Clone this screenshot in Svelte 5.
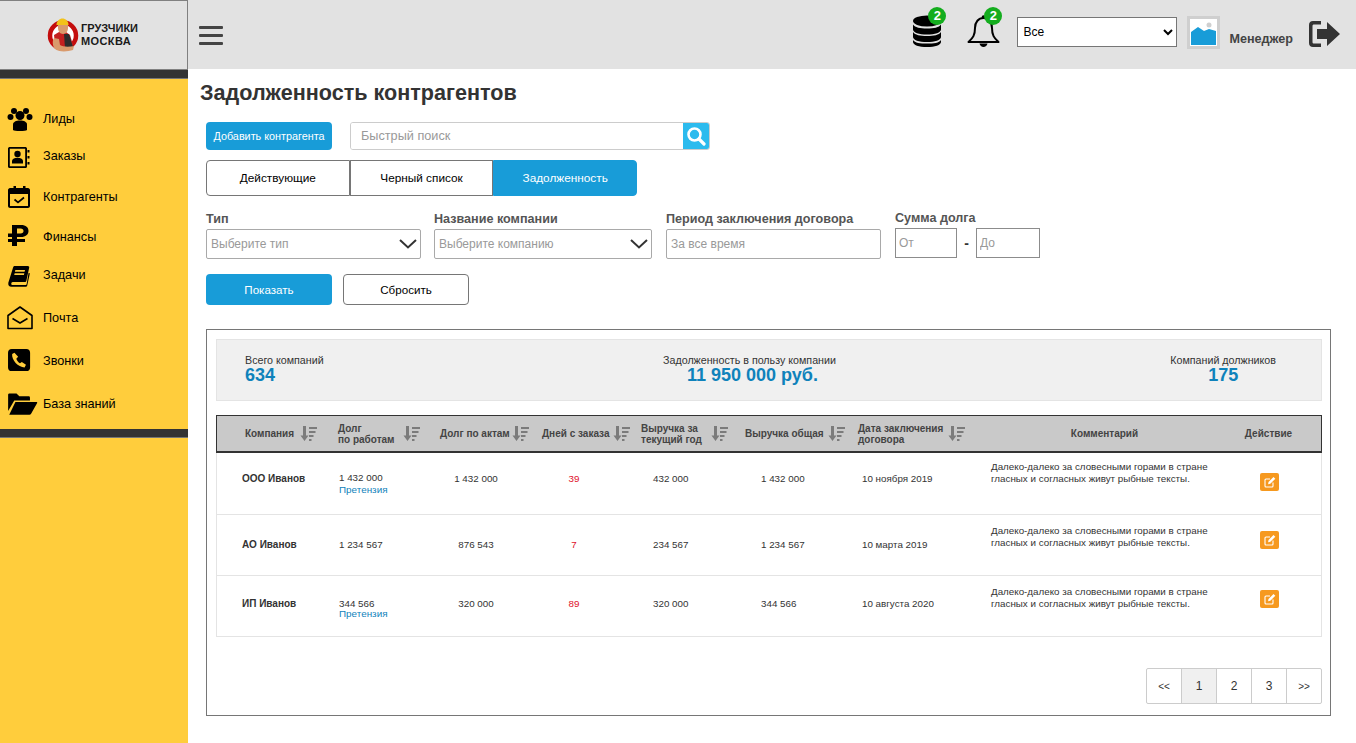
<script>
  const nav = ['Лиды', 'Заказы', 'Контрагенты', 'Финансы', 'Задачи', 'Почта', 'Звонки', 'База знаний'];

  const columns = [
    { key: 'company', title: 'Компания', sort: true },
    { key: 'work', title: 'Долг<br>по работам', sort: true },
    { key: 'acts', title: 'Долг по актам', sort: true },
    { key: 'days', title: 'Дней с заказа', sort: true },
    { key: 'year', title: 'Выручка за<br>текущий год', sort: true },
    { key: 'total', title: 'Выручка общая', sort: true },
    { key: 'date', title: 'Дата заключения<br>договора', sort: true },
    { key: 'comment', title: 'Комментарий' },
    { key: 'action', title: 'Действие' }
  ];

  const comment = 'Далеко-далеко за словесными горами в стране гласных и согласных живут рыбные тексты.';

  const rows = [
    { name: 'ООО Иванов', work: '1 432 000', claim: true, acts: '1 432 000', days: 39, year: '432 000', total: '1 432 000', date: '10 ноября 2019' },
    { name: 'АО Иванов', work: '1 234 567', claim: false, acts: '876 543', days: 7, year: '234 567', total: '1 234 567', date: '10 марта 2019' },
    { name: 'ИП Иванов', work: '344 566', claim: true, acts: '320 000', days: 89, year: '320 000', total: '344 566', date: '10 августа 2020' }
  ];

  const pages = ['<<', '1', '2', '3', '>>'];
</script>

{#snippet sortIcon()}
  <svg class="sort" viewBox="0 0 17 15" width="17" height="15">
    <path d="M3 0h3v9.500h2.500L4.500 15 .5 9.500H3z" fill="#7b7b7b" />
    <path d="M9 1h8v2H9zM9 5h6.500v2H9zM9 9h4.500v2H9zM9 13h2.500v2H9z" fill="#7b7b7b" />
  </svg>
{/snippet}

{#snippet navIcon(i)}
  <svg class="nav-icon" viewBox="0 0 26 26" width="26" height="26">
    {#if i === 0}
      <circle cx="7" cy="5" r="3" /><circle cx="19" cy="5" r="3" />
      <circle cx="3.500" cy="11" r="3" /><circle cx="22.500" cy="11" r="3" />
      <circle cx="13" cy="9.500" r="4.500" />
      <path d="M6 24v-5.500c0-2.500 3-4 7-4s7 1.500 7 4V24c-1 .6-3 1-7 1s-6-.4-7-1z" />
    {:else if i === 1}
      <path d="M1 5.500C1 4.500 2 4 3 4h15c1 0 2 .5 2 1.500v18c0 1-1 1.500-2 1.500H3c-1 0-2-.5-2-1.500zM2.800 5.800v17.400h15.400V5.800z" fill-rule="evenodd" />
      <path d="M20.500 7h2v2.500h-2zM20.500 13h2v2.500h-2zM20.500 19h2v2.500h-2z" />
      <circle cx="10.500" cy="11" r="3.200" /><path d="M5 20.500v-2.500c0-2 2-3.300 5.500-3.300s5.500 1.300 5.500 3.300v2.500z" />
    {:else if i === 2}
      <path d="M1 6c0-1 1-2 2-2h3.500V2h2.500v2h7V2h2.500v2H21c1 0 2 1 2 2v16c0 1-1 2-2 2H3c-1 0-2-1-2-2zM3 10v12h18V10z" fill-rule="evenodd" />
      <path d="M7.500 15.500l3.500 3 6-5" fill="none" stroke="#000" stroke-width="1.700" />
    {:else if i === 3}
      <path d="M5 1h9c5 0 7.500 2.500 7.500 6s-3 6-7.500 6h-4v2h8v3h-8v4H5v-4H1v-3h4v-2H1V9.500h4zM10 4.500v5h3.500c2 0 3-1 3-2.500s-1-2.500-3-2.500z" fill-rule="evenodd" />
    {:else if i === 4}
      <g transform="translate(0 3.500) scale(.88 .82)">
        <path d="M7 2c.3-1 1-1.500 2-1.500h14.500c1.500 0 2 1 1.700 2.200L22 18.500c-.2 1-.8 1.500-2 1.500H6.500c-2 0-2.300 3.800 0 3.800H21c.5 0 1 0 1.300-.8L24.500 9l1.500.5-3 15c-.2 1-1 1.500-2 1.500H5c-2.500 0-4-2-3.500-5zM9.500 5.500l-.5 2h11l.5-2zM8.700 9.500l-.5 2h11l.5-2z" fill-rule="evenodd" />
      </g>
    {:else if i === 5}
      <path d="M1 10.500L13 2l12 8.500v13H1z" fill="none" stroke="#000" stroke-width="1.600" stroke-linejoin="round" />
      <path d="M5.500 13.500l7.500 4.500 7.500-4.500" fill="none" stroke="#000" stroke-width="1.600" />
    {:else if i === 6}
      <g transform="translate(.1 .1) scale(.92)">
        <path d="M5 1h16c2.500 0 4 1.500 4 4v16c0 2.500-1.500 4-4 4H5c-2.500 0-4-1.500-4-4V5c0-2.500 1.500-4 4-4zM8 5L5.500 6.500c-.8 6.500 6.500 14.500 13.500 14.500l1.500-3-4.500-3-2 1.500c-1.800-1-3.500-3.200-4-5L12 9.500z" fill-rule="evenodd" />
      </g>
    {:else}
      <g transform="translate(0 1) scale(1.120 .95)">
        <path d="M1 3c0-1 .5-1.500 1.500-1.500h6l2.500 3h8c1 0 1.500.5 1.500 1.500v3H6.500L1 20z" />
        <path d="M7.500 10.500h18.500c1 0 1.200.6.800 1.300L21.500 23c-.3.600-.8 1-1.500 1H2z" />
      </g>
    {/if}
  </svg>
{/snippet}

<div class="page">
  <aside class="sidebar">
    <div class="logo">
      <svg viewBox="0 0 34 36" width="34" height="36" class="logo-mark">
        <circle cx="17" cy="17.500" r="13" fill="#fff" stroke="#c40d0d" stroke-width="4.500" />
        <path d="M8 17l5-3h7l4 3 3 10-1 4-12 1-5-6z" fill="#c4201f" />
        <path d="M18 16h5l4 13-8 1z" fill="#2c2c2c" />
        <path d="M12 6h10v4c0 3-2 6-5 6s-5-3-5-6z" fill="#d99a6c" />
        <path d="M10.500 7c0-4 3-6.500 6-6.500s6 2.500 6 6.500z" fill="#f2c21a" />
        <path d="M8 20c-2 3-1.500 8 1 11 3 3 12 3 18 1l1-4c-5 1-11 1-14-1l-1-6z" fill="#d99a6c" />
      </svg>
      <div class="logo-text">
        <span>ГРУЗЧИКИ</span>
        <span class="line-two">МОСКВА</span>
      </div>
    </div>
    <div class="bar"></div>
    <nav class="nav">
      {#each nav as item, i}
        <div class="nav-item">
          {@render navIcon(i)}
          <span>{item}</span>
        </div>
      {/each}
    </nav>
    <div class="bar"></div>
  </aside>

  <div class="main">
    <header class="header">
      <button class="burger" aria-label="Меню"><i></i><i></i><i></i></button>

      <div class="header-right">
        <div class="notify db">
          <svg viewBox="0 0 28 32" width="28" height="32">
            <ellipse cx="14" cy="6" rx="14" ry="5.500" />
            <path d="M0 9.500c2 3 7 4 14 4s12-1 14-4v5c0 3-6 5-14 5S0 17.500 0 14.500z" />
            <path d="M0 17.500c2 3 7 4 14 4s12-1 14-4v5c0 3-6 5-14 5S0 25.500 0 22.500z" transform="translate(0 -.5)" />
            <path d="M0 25c2 3 7 3.500 14 3.500S26 28 28 25v2c0 3-6 5-14 5S0 30 0 27z" />
          </svg>
          <b class="badge">2</b>
        </div>
        <div class="notify bell">
          <svg viewBox="0 0 33 32" width="33" height="32">
            <path d="M16.500 3c5 0 8.500 4 8.500 10 0 7 2 10 6.500 14H1.500C6 23 8 20 8 13c0-6 3.500-10 8.500-10z" fill="none" stroke="#000" stroke-width="2" stroke-linejoin="round" />
            <path d="M12.500 28.500c.5 2 2 3.500 4 3.500s3.500-1.500 4-3.500z" />
            <circle cx="16.500" cy="2" r="1.800" />
          </svg>
          <b class="badge">2</b>
        </div>
        <select class="scope">
          <option>Все</option>
        </select>
        <div class="avatar">
          <svg viewBox="0 0 27 27" width="27" height="27">
            <rect width="27" height="27" fill="#fff" />
            <circle cx="19" cy="6" r="2.500" fill="#cfcfcf" />
            <path d="M1 13l7-5 6 4 5-2 7 2v14H1z" fill="#189cd8" />
          </svg>
        </div>
        <span class="role">Менеджер</span>
        <svg class="logout" viewBox="0 0 31 26" width="31" height="26">
          <path d="M12 0v3.500H5c-1 0-1.500.5-1.500 1.500v16c0 1 .5 1.500 1.500 1.500h7V26H4c-2.500 0-4-1.500-4-4V4c0-2.500 1.500-4 4-4z" fill="#333" />
          <path d="M8 8h10V1l13 12-13 12v-7H8z" fill="#333" />
        </svg>
      </div>
    </header>

    <main class="content">
      <h1>Задолженность контрагентов</h1>

      <div class="toolbar">
        <button class="btn primary add">Добавить контрагента</button>
        <div class="search">
          <input type="text" placeholder="Быстрый поиск" />
          <button class="search-btn" aria-label="Поиск">
            <svg viewBox="0 0 20 20" width="20" height="20">
              <circle cx="8.500" cy="8.500" r="6" fill="none" stroke="#fff" stroke-width="2.600" />
              <path d="M13 13l5 5" stroke="#fff" stroke-width="3.200" stroke-linecap="round" />
            </svg>
          </button>
        </div>
      </div>

      <div class="tabs">
        <div class="tab">Действующие</div>
        <div class="tab">Черный список</div>
        <div class="tab active">Задолженность</div>
      </div>

      <div class="filters">
        <div class="field type">
          <span class="label">Тип</span>
          <div class="fake-select">
            <span>Выберите тип</span>
            <svg viewBox="0 0 18 10" width="18" height="10"><path d="M1 1l8 7.500L17 1" fill="none" stroke="#333" stroke-width="2" /></svg>
          </div>
        </div>
        <div class="field company">
          <span class="label">Название компании</span>
          <div class="fake-select">
            <span>Выберите компанию</span>
            <svg viewBox="0 0 18 10" width="18" height="10"><path d="M1 1l8 7.500L17 1" fill="none" stroke="#333" stroke-width="2" /></svg>
          </div>
        </div>
        <div class="field period">
          <span class="label">Период заключения договора</span>
          <div class="fake-select"><span>За все время</span></div>
        </div>
        <div class="field sum">
          <span class="label">Сумма долга</span>
          <div class="range">
            <input type="text" placeholder="От" />
            <b>-</b>
            <input type="text" placeholder="До" />
          </div>
        </div>
      </div>

      <div class="actions">
        <button class="btn primary">Показать</button>
        <button class="btn outline">Сбросить</button>
      </div>

      <section class="panel">
        <div class="summary">
          <div class="stat">
            <span>Всего компаний</span>
            <strong>634</strong>
          </div>
          <div class="stat center middle">
            <span>Задолженность в пользу компании</span>
            <strong>11 950 000 руб.</strong>
          </div>
          <div class="stat center">
            <span>Компаний должников</span>
            <strong>175</strong>
          </div>
        </div>

        <div class="table">
          <div class="thead">
            {#each columns as col}
              <div class="th {col.key}">
                <span>{@html col.title}</span>
                {#if col.sort}{@render sortIcon()}{/if}
              </div>
            {/each}
          </div>
          {#each rows as row, i}
            <div class="tr row{i + 1}">
              <div class="td company"><b>{row.name}</b></div>
              <div class="td work">
                <span>{row.work}</span>
                {#if row.claim}<a href="#claim">Претензия</a>{/if}
              </div>
              <div class="td acts">{row.acts}</div>
              <div class="td days">{row.days}</div>
              <div class="td year">{row.year}</div>
              <div class="td total">{row.total}</div>
              <div class="td date">{row.date}</div>
              <div class="td comment">{comment}</div>
              <div class="td action">
                <button class="edit" aria-label="Редактировать">
                  <svg viewBox="0 0 12 12" width="12" height="12">
                    <path d="M9 6.500V10c0 .6-.4 1-1 1H2c-.6 0-1-.4-1-1V4c0-.6.4-1 1-1h4" fill="none" stroke="#fff" stroke-width="1.100" />
                    <path d="M4.500 6l5-5 1.800 1.800-5 5-2.200.4z" fill="#fff" />
                  </svg>
                </button>
              </div>
            </div>
          {/each}
        </div>

        <div class="pagination">
          {#each pages as p, i}
            <div class="page-link" class:current={p === '1'} class:arrow={i === 0 || i === 4}>{p}</div>
          {/each}
        </div>
      </section>
    </main>
  </div>
</div>

<style>
  :global(body) {
    margin: 0;
    background: #fff;
  }

  .page {
    display: flex;
    height: 743px;
    overflow: hidden;
    font-family: "Liberation Sans", Arial, sans-serif;
    color: #333;
  }

  /* sidebar */
  .sidebar {
    width: 188px;
    flex: none;
    background: #ffcd3c;
  }

  .logo {
    box-sizing: border-box;
    height: 70px;
    background: #e2e2e2;
    border: 1px solid #808080;
    border-left: none;
    display: flex;
    align-items: center;
    padding-left: 46px;
    gap: 1px;
  }

  .logo-mark {
    margin-top: 2px;
  }

  .logo-text {
    display: flex;
    flex-direction: column;
    font-weight: 700;
    font-size: 11px;
    line-height: 13px;
    color: #1a1a1a;
  }

  .line-two {
    letter-spacing: .4px;
  }

  .bar {
    height: 8px;
    background: #333;
    border-bottom: 1px solid #777;
  }

  .nav {
    height: 350px;
    padding-top: 20px;
    box-sizing: border-box;
  }

  .nav-item {
    height: 40px;
    display: flex;
    align-items: center;
    gap: 10px;
    padding-left: 7px;
    font-size: 12.700px;
    color: #000;
  }

  .nav-item:nth-child(2) { margin-top: -3px; }
  .nav-item:nth-child(3) { margin-top: 1px; }
  .nav-item:nth-child(5) { margin-top: -2px; }
  .nav-item:nth-child(n+6) { margin-top: 3px; }

  .nav-icon {
    flex: none;
    fill: #000;
    overflow: visible;
  }

  /* top bar */
  .main {
    flex: 1;
    min-width: 0;
  }

  .header {
    height: 69px;
    background: #e2e2e2;
    display: flex;
    align-items: center;
    justify-content: space-between;
    padding: 0 16px 0 11px;
  }

  .burger {
    width: 24px;
    height: 19px;
    padding: 0;
    border: none;
    background: none;
    display: flex;
    flex-direction: column;
    justify-content: space-between;
    margin-top: 1px;
  }

  .burger i {
    display: block;
    height: 3px;
    background: #444;
    border-radius: 1px;
  }

  .header-right {
    display: flex;
    align-items: center;
    margin-top: -5px;
  }

  .notify {
    position: relative;
    display: flex;
    margin-top: -2px;
  }

  .notify.db {
    margin-right: 26px;
  }

  .notify.bell {
    margin-right: 17px;
  }

  .badge {
    position: absolute;
    top: -8px;
    right: -5px;
    width: 18px;
    height: 18px;
    border-radius: 50%;
    background: #14ad1e;
    color: #fff;
    font-size: 13px;
    line-height: 18px;
    text-align: center;
  }

  .bell .badge {
    right: -2px;
  }

  .scope {
    width: 160px;
    height: 30px;
    box-sizing: border-box;
    border: 1px solid #767676;
    background: #fff;
    font-family: inherit;
    font-size: 12px;
    color: #000;
    padding-left: 1px;
    margin-right: 10px;
  }

  .avatar {
    display: flex;
    border: 3px solid #cfcfcf;
    margin-right: 9px;
  }

  .role {
    font-size: 12.600px;
    font-weight: 700;
    color: #444;
    margin: 13px 16px 0 0;
  }

  .logout {
    margin-top: 4px;
  }

  /* content */
  .content {
    padding: 0 25px 0 18px;
  }

  h1 {
    margin: 0 0 0 -6px;
    padding-top: 11px;
    height: 53px;
    box-sizing: border-box;
    font-size: 21.600px;
    line-height: 25px;
    font-weight: 700;
    color: #333;
  }

  .toolbar {
    display: flex;
    gap: 18px;
  }

  .btn {
    box-sizing: border-box;
    width: 126px;
    border-radius: 4px;
    font-family: inherit;
    font-size: 11.600px;
    padding: 0;
  }

  .primary {
    background: #189cd8;
    border: none;
    color: #fff;
  }

  .outline {
    background: #fff;
    border: 1px solid #767676;
    color: #000;
  }

  .add {
    height: 28px;
    font-size: 10.800px;
  }

  .search {
    width: 360px;
    height: 28px;
    box-sizing: border-box;
    display: flex;
    border: 1px solid #ccc;
    border-radius: 3px;
    overflow: hidden;
  }

  .search input {
    flex: 1;
    min-width: 0;
    border: none;
    outline: none;
    padding: 0 10px;
    font-family: inherit;
    font-size: 12.700px;
  }

  input::placeholder {
    color: #999;
    opacity: 1;
  }

  .search-btn {
    width: 26px;
    padding: 0;
    border: none;
    background: #2cbbee;
    display: flex;
    align-items: center;
    justify-content: center;
  }

  .tabs {
    display: flex;
    margin-top: 10px;
    width: 431px;
  }

  .tab {
    box-sizing: border-box;
    flex: 1;
    height: 36px;
    line-height: 35px;
    text-align: center;
    font-size: 11.800px;
    color: #000;
    border: 1px solid #767676;
  }

  .tab:first-child {
    border-radius: 4px 0 0 4px;
  }

  .tab.active {
    background: #189cd8;
    border-color: #189cd8;
    color: #fff;
    border-radius: 0 4px 4px 0;
  }

  .filters {
    display: flex;
    margin-top: 14px;
    height: 64px;
  }

  .field {
    display: flex;
    flex-direction: column;
  }

  .field.type { width: 215px; margin-right: 13px; }
  .field.company { width: 218px; margin-right: 14px; }
  .field.period { width: 215px; margin-right: 14px; }
  .field.sum { margin-top: -1px; }

  .label {
    font-size: 12.600px;
    line-height: 16px;
    font-weight: 700;
    color: #555;
    padding-top: 1px;
    margin-bottom: 2px;
  }

  .fake-select {
    box-sizing: border-box;
    height: 30px;
    border: 1px solid #a9a9a9;
    border-radius: 2px;
    display: flex;
    align-items: center;
    justify-content: space-between;
    padding: 0 3px 0 4px;
    font-size: 12px;
    color: #999;
  }

  .range {
    display: flex;
    align-items: center;
  }

  .range input {
    box-sizing: border-box;
    width: 62px;
    height: 30px;
    border: 1px solid #8c8c8c;
    padding: 0 3px;
    font-family: inherit;
    font-size: 12px;
    outline: none;
  }

  .range input:last-child {
    width: 64px;
  }

  .range b {
    width: 19px;
    text-align: center;
    font-size: 14px;
  }

  .actions {
    display: flex;
    gap: 11px;
  }

  .actions .btn {
    height: 31px;
  }

  .panel {
    box-sizing: border-box;
    width: 1125px;
    height: 387px;
    margin-top: 24px;
    border: 1px solid #767676;
    padding: 9px 9px 0;
  }

  .summary {
    box-sizing: border-box;
    height: 62px;
    width: 1106px;
    background: #f0f0f0;
    border: 1px solid #e4e4e4;
    display: flex;
    justify-content: space-between;
    padding: 14px 45px 0 28px;
  }

  .stat {
    display: flex;
    flex-direction: column;
    font-size: 10.700px;
    line-height: 12px;
    color: #333;
  }

  .stat.center {
    align-items: center;
  }

  .stat.middle {
    padding-left: 5px;
  }

  .stat.middle strong {
    padding-left: 6px;
  }

  .stat strong {
    font-size: 18px;
    line-height: 16px;
    margin-top: 1px;
    color: #0f82bb;
  }

  .table {
    width: 1106px;
    margin-top: 14px;
    border: 1px solid #e4e4e4;
    border-top: none;
    box-sizing: border-box;
  }

  .thead, .tr {
    display: grid;
    grid-template-columns: 120px 102px 102px 100px 103px 113px 129px 237px 1fr;
  }

  .thead {
    box-sizing: border-box;
    height: 38px;
    margin: 0 -1px;
    background: #c9c9c9;
    border: 1px solid #333;
    border-bottom-width: 2px;
  }

  .th {
    display: flex;
    align-items: center;
    font-size: 10px;
    line-height: 11px;
    font-weight: 700;
    color: #444;
  }

  .th .sort {
    flex: none;
    margin-left: 6px;
  }

  .th.company { padding-left: 28px; }
  .th.work { padding-left: 1px; }
  .th.work .sort { margin-left: 8px; }
  .th.acts { padding-left: 1px; }
  .th.acts .sort { margin-left: 2px; }
  .th.days { padding-left: 1px; }
  .th.days .sort { margin-left: 4px; }
  .th.year .sort { margin-left: 9px; }
  .th.total { padding-left: 1px; }
  .th.total .sort { margin-left: 4px; }
  .th.date { padding-left: 1px; }
  .th.date .sort { margin-left: 5px; }
  .th.comment, .th.action { justify-content: center; }
  .th.action { padding-right: 7px; }

  .tr {
    height: 61px;
    border-bottom: 1px solid #e4e4e4;
    box-sizing: border-box;
    font-size: 9.800px;
    line-height: 12px;
    color: #333;
  }

  .tr:last-child {
    height: 60px;
    border-bottom: none;
  }

  .row1 { height: 62px; }

  .td {
    display: flex;
    flex-direction: column;
    justify-content: center;
  }

  .row1 .td { padding-bottom: 10px; }
  .row3 .td { padding-bottom: 4px; }

  .td.company { padding-left: 25px; }
  .td.company b { font-size: 10px; }
  .td.work { padding-left: 2px; }
  .td.work a {
    color: #0f82bb;
    text-decoration: none;
    font-size: 9.900px;
  }
  .row1 .td.work { padding-top: 10px; }
  .row3 .td.work { padding-top: 10px; line-height: 10px; }
  .td.acts { align-items: center; padding-right: 28px; }
  .td.days { align-items: center; padding-right: 34px; color: #e0102a; }
  .td.year { padding-left: 12px; }
  .td.total { padding-left: 17px; }
  .td.date { padding-left: 5px; }
  .td.comment { padding-left: 5px; padding-right: 10px; justify-content: flex-start; padding-top: 10px; }
  .row1 .td.comment { padding-top: 8px; }
  .td.action { align-items: center; padding-right: 5px; justify-content: flex-start; padding-top: 16px; }
  .row1 .td.action { padding-top: 20px; }
  .row3 .td.action { padding-top: 14px; }

  .edit {
    width: 19px;
    height: 18px;
    padding: 0;
    border: none;
    border-radius: 2px;
    background: #f6991f;
    display: flex;
    align-items: center;
    justify-content: center;
  }

  .pagination {
    display: flex;
    width: 176px;
    height: 36px;
    box-sizing: border-box;
    margin: 31px 0 0 930px;
    border: 1px solid #ccc;
    border-radius: 2px;
  }

  .page-link {
    flex: 1;
    display: flex;
    align-items: center;
    justify-content: center;
    font-size: 12px;
    color: #333;
    border-left: 1px solid #ccc;
  }

  .page-link:first-child {
    border-left: none;
  }

  .page-link.current {
    background: #f0f0f0;
  }

  .page-link.arrow {
    font-size: 10px;
  }
</style>
